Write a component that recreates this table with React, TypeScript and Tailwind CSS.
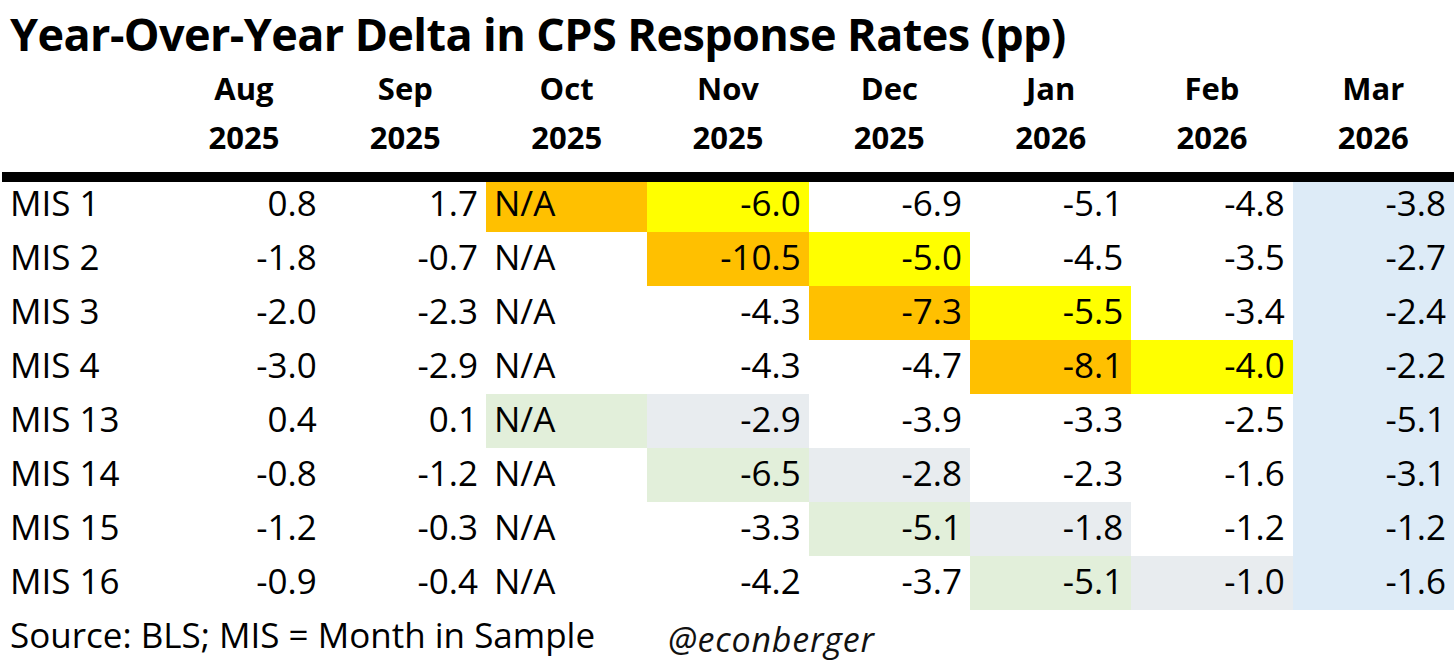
import React from 'react';

type Fill = 'o' | 'y' | 'g' | 's' | '';

const months = [
  ['Aug', '2025'],
  ['Sep', '2025'],
  ['Oct', '2025'],
  ['Nov', '2025'],
  ['Dec', '2025'],
  ['Jan', '2026'],
  ['Feb', '2026'],
  ['Mar', '2026'],
];

const rows: { label: string; values: string[]; fills: Fill[] }[] = [
  { label: 'MIS 1', values: ['0.8', '1.7', 'N/A', '-6.0', '-6.9', '-5.1', '-4.8', '-3.8'], fills: ['', '', 'o', 'y', '', '', '', ''] },
  { label: 'MIS 2', values: ['-1.8', '-0.7', 'N/A', '-10.5', '-5.0', '-4.5', '-3.5', '-2.7'], fills: ['', '', '', 'o', 'y', '', '', ''] },
  { label: 'MIS 3', values: ['-2.0', '-2.3', 'N/A', '-4.3', '-7.3', '-5.5', '-3.4', '-2.4'], fills: ['', '', '', '', 'o', 'y', '', ''] },
  { label: 'MIS 4', values: ['-3.0', '-2.9', 'N/A', '-4.3', '-4.7', '-8.1', '-4.0', '-2.2'], fills: ['', '', '', '', '', 'o', 'y', ''] },
  { label: 'MIS 13', values: ['0.4', '0.1', 'N/A', '-2.9', '-3.9', '-3.3', '-2.5', '-5.1'], fills: ['', '', 'g', 's', '', '', '', ''] },
  { label: 'MIS 14', values: ['-0.8', '-1.2', 'N/A', '-6.5', '-2.8', '-2.3', '-1.6', '-3.1'], fills: ['', '', '', 'g', 's', '', '', ''] },
  { label: 'MIS 15', values: ['-1.2', '-0.3', 'N/A', '-3.3', '-5.1', '-1.8', '-1.2', '-1.2'], fills: ['', '', '', '', 'g', 's', '', ''] },
  { label: 'MIS 16', values: ['-0.9', '-0.4', 'N/A', '-4.2', '-3.7', '-5.1', '-1.0', '-1.6'], fills: ['', '', '', '', '', 'g', 's', ''] },
];

const fillClass: Record<Fill, string> = {
  o: 'bg-[#ffc000]',
  y: 'bg-[#ffff00]',
  g: 'bg-[#e2efda]',
  s: 'bg-[#e8ecef]',
  '': '',
};

export default function App() {
  return (
    <div className="w-[1456px] h-[666px] bg-white overflow-hidden text-black font-['Open_Sans',sans-serif]">
      {/* Title */}
      <div className="h-[56px] pt-[11px] pl-[10px]">
        <h1 className="text-[45px] leading-none font-bold tracking-[-0.6px] whitespace-nowrap">
          Year-Over-Year Delta in CPS Response Rates (pp)
        </h1>
      </div>

      {/* Month headers */}
      <div className="h-[116px] pt-[8px] ml-[2px] w-[1452px] grid grid-cols-9">
        <div />
        {months.map(([m, y]) => (
          <div key={m} className="flex flex-col items-center text-[31px] leading-[49px] font-bold">
            <span>{m}</span>
            <span>{y}</span>
          </div>
        ))}
      </div>

      <div className="ml-[2px] w-[1452px] h-[10px] bg-black" />

      {/* Body */}
      <div className="ml-[2px] w-[1452px] grid grid-cols-9 text-[35px] leading-none">
        {rows.map((row, r) => (
          <React.Fragment key={row.label}>
            <div className={`${r === 0 ? 'h-[50px]' : 'h-[54px]'} flex items-end pb-[12px] pl-[8px] whitespace-nowrap`}>
              {row.label}
            </div>
            {row.values.map((v, c) => (
              <div
                key={c}
                className={`${r === 0 ? 'h-[50px]' : 'h-[54px]'} flex items-end pb-[12px] ${
                  c === 2 ? 'justify-start pl-[8px]' : 'justify-end pr-[8px]'
                } ${c === 7 ? 'bg-[#ddebf7]' : fillClass[row.fills[c]]}`}
              >
                {v}
              </div>
            ))}
          </React.Fragment>
        ))}
      </div>

      {/* Footer */}
      <div className="flex items-start">
        <div className="w-[668px] pl-[10px] pt-[7px] text-[35px] leading-none whitespace-nowrap">
          Source: BLS; MIS = Month in Sample
        </div>
        <div className="pt-[12px] text-[34px] leading-none italic tracking-[0.8px] text-[#111] whitespace-nowrap">
          @econberger
        </div>
      </div>
    </div>
  );
}
